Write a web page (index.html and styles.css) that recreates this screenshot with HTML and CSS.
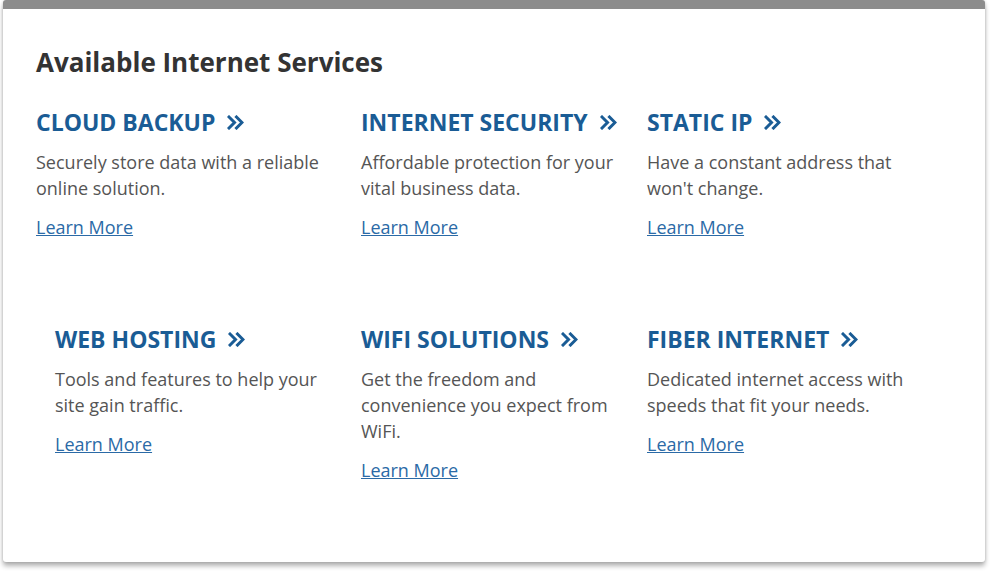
FILE: index.html
```html
<!DOCTYPE html>
<html lang="en">
<head>
<meta charset="utf-8">
<title>Available Internet Services</title>
<link rel="stylesheet" href="styles.css">
</head>
<body>
<div class="card">
  <h2 class="heading">Available Internet Services</h2>
  <div class="row">
    <div class="item">
      <a class="title" href="#">CLOUD BACKUP <svg class="chev" viewBox="0 0 17 15"><polyline points="2,2 7.5,7.5 2,13"/><polyline points="9.5,2 15,7.5 9.5,13"/></svg></a>
      <p class="desc">Securely store data with a reliable<br>online solution.</p>
      <a class="more" href="#">Learn More</a>
    </div>
    <div class="item">
      <a class="title" href="#">INTERNET SECURITY <svg class="chev" viewBox="0 0 17 15"><polyline points="2,2 7.5,7.5 2,13"/><polyline points="9.5,2 15,7.5 9.5,13"/></svg></a>
      <p class="desc">Affordable protection for your<br>vital business data.</p>
      <a class="more" href="#">Learn More</a>
    </div>
    <div class="item">
      <a class="title" href="#">STATIC IP <svg class="chev" viewBox="0 0 17 15"><polyline points="2,2 7.5,7.5 2,13"/><polyline points="9.5,2 15,7.5 9.5,13"/></svg></a>
      <p class="desc">Have a constant address that<br>won't change.</p>
      <a class="more" href="#">Learn More</a>
    </div>
  </div>
  <div class="row row-second">
    <div class="item item-indent">
      <a class="title" href="#">WEB HOSTING <svg class="chev" viewBox="0 0 17 15"><polyline points="2,2 7.5,7.5 2,13"/><polyline points="9.5,2 15,7.5 9.5,13"/></svg></a>
      <p class="desc">Tools and features to help your<br>site gain traffic.</p>
      <a class="more" href="#">Learn More</a>
    </div>
    <div class="item">
      <a class="title" href="#">WIFI SOLUTIONS <svg class="chev" viewBox="0 0 17 15"><polyline points="2,2 7.5,7.5 2,13"/><polyline points="9.5,2 15,7.5 9.5,13"/></svg></a>
      <p class="desc">Get the freedom and<br>convenience you expect from<br>WiFi.</p>
      <a class="more" href="#">Learn More</a>
    </div>
    <div class="item">
      <a class="title" href="#">FIBER INTERNET <svg class="chev" viewBox="0 0 17 15"><polyline points="2,2 7.5,7.5 2,13"/><polyline points="9.5,2 15,7.5 9.5,13"/></svg></a>
      <p class="desc">Dedicated internet access with<br>speeds that fit your needs.</p>
      <a class="more" href="#">Learn More</a>
    </div>
  </div>
</div>
</body>
</html>
```

FILE: styles.css
```css
html, body {
  margin: 0;
  padding: 0;
  background: #ffffff;
}

body {
  font-family: "Open Sans", "Noto Sans", sans-serif;
  padding: 0 15px 11px 3px;
}

.card {
  background: #ffffff;
  border-top: 9px solid #8c8c8c;
  border-radius: 3px;
  box-shadow: 0 4px 5px rgba(0, 0, 0, 0.3), 0 0 3px rgba(0, 0, 0, 0.15);
  height: 562px;
  box-sizing: border-box;
  padding: 37px 20px 0 33px;
}

.heading {
  margin: 0 0 28px 0;
  font-size: 26px;
  line-height: 33px;
  font-weight: 700;
  color: #333333;
}

.row {
  display: grid;
  grid-template-columns: 325px 286px 1fr;
}

.row-second {
  margin-top: 84px;
}

.item-indent {
  padding-left: 19px;
}

.title {
  display: inline-flex;
  align-items: center;
  gap: 12px;
  font-size: 23px;
  line-height: 30px;
  font-weight: 700;
  color: #1a5c95;
  text-decoration: none;
  white-space: nowrap;
}

.chev {
  width: 17px;
  height: 15px;
  fill: none;
  stroke: #1a5c95;
  stroke-width: 3;
  stroke-linecap: square;
}

.desc {
  margin: 12px 0 13px 0;
  font-size: 18px;
  line-height: 26px;
  color: #555555;
  white-space: nowrap;
}

.more {
  display: inline-block;
  font-size: 18px;
  line-height: 26px;
  color: #2b6aa6;
  text-decoration: underline;
}
```
